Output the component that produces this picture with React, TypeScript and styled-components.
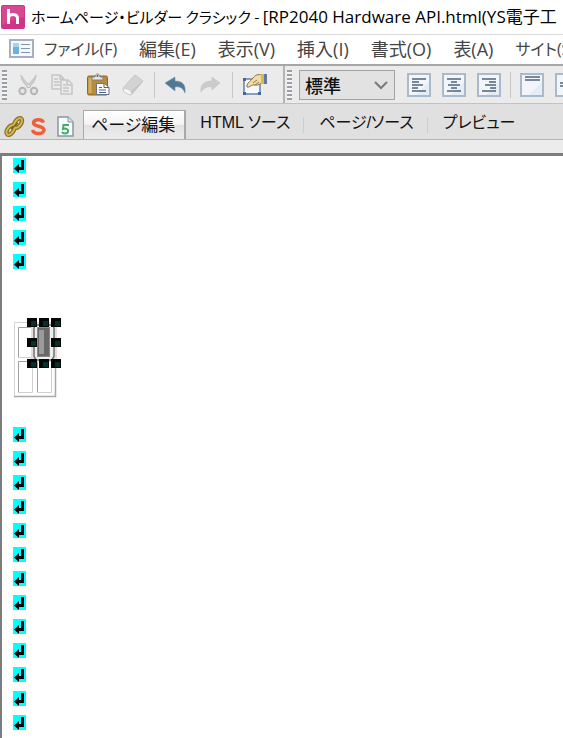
import React from "react";
import styled, { createGlobalStyle, css } from "styled-components";

const GlobalStyle = createGlobalStyle`
  * { box-sizing: border-box; }
  html, body, #root { height: 100%; }
  body {
    margin: 0;
    overflow: hidden;
    background: #fff;
    font-family: "Noto Sans CJK JP", "Noto Sans", sans-serif;
    font-feature-settings: "palt";
    color: #111;
  }
  button, select { font: inherit; font-feature-settings: inherit; color: inherit; }
`;

const Window = styled.main`
  display: flex;
  flex-direction: column;
  height: 100vh;
  min-width: 0;
  overflow: hidden;
`;

const TitleBar = styled.header`
  display: flex;
  align-items: center;
  gap: 6px;
  flex: none;
  height: 34px;
  padding-left: 1px;
  white-space: nowrap;
  overflow: hidden;
`;

const Title = styled.h1`
  flex: none;
  margin: 0;
  font-size: 15px;
  font-weight: 400;
  line-height: 34px;
  color: #000;
`;

const LatinText = styled.span`
  font-family: "Open Sans", "Noto Sans CJK JP", sans-serif;
  font-size: 17px;
`;

const MenuBar = styled.nav`
  display: flex;
  align-items: center;
  gap: 22px;
  flex: none;
  height: 30px;
  padding: 0 0 2px 9px;
  border-top: 1px solid #d9d9d9;
  overflow: hidden;
`;

const MenuLead = styled.div`
  display: flex;
  align-items: center;
  flex: none;
  gap: 10px;
`;

const MenuButton = styled.button<{ $kana?: boolean }>`
  flex: none;
  padding: 0;
  border: 0;
  background: none;
  font-family: "Open Sans", "Noto Sans CJK JP", sans-serif;
  font-size: ${(p) => (p.$kana ? 16 : 18)}px;
  line-height: 26px;
  color: #444;
  white-space: nowrap;
`;

const ToolBar = styled.div`
  display: flex;
  align-items: center;
  flex: none;
  height: 40px;
  border-top: 2px solid #a6a6a6;
  border-bottom: 1px solid #c2c2c2;
  background: #ebebeb;
  overflow: hidden;
`;

const ToolGroup = styled.div<{ $divided?: boolean }>`
  display: flex;
  align-items: center;
  flex: none;
  height: 100%;
  padding: 0 17px 0 2px;
  ${(p) => p.$divided && css`border-right: 2px solid #b4b4b4;`}
`;

const Grip = styled.div`
  flex: none;
  width: 5px;
  height: 30px;
  background: repeating-linear-gradient(#9a9ea5 0 2px, #f4f4f4 2px 4px);
`;

const Tools = styled.div<{ $start?: boolean }>`
  display: flex;
  gap: 11px;
  ${(p) => p.$start && css`margin-left: 9px;`}
`;

const ToolButton = styled.button`
  display: grid;
  place-items: center;
  width: 24px;
  height: 26px;
  padding: 0;
  border: 0;
  background: none;
`;

const Divider = styled.span`
  flex: none;
  width: 1px;
  height: 26px;
  margin: 0 9px;
  background: #c6c6c6;
`;

const TabDivider = styled.span`
  flex: none;
  align-self: center;
  width: 1px;
  height: 16px;
  margin: 0 15px 0 13px;
  background: #cecece;
`;

const SelectBox = styled.div`
  display: grid;
  align-items: center;
  flex: none;
  width: 96px;
  height: 30px;
  margin: 0 12px 0 7px;
  border: 1px solid #a3a3a3;
  background: #e2e2e2;
  & > * { grid-area: 1 / 1; }
  & > svg { justify-self: end; margin-right: 5px; pointer-events: none; }
`;

const StyleSelect = styled.select`
  width: 100%;
  height: 28px;
  padding: 0 0 0 5px;
  border: 0;
  appearance: none;
  background: none;
  font-size: 18px;
  font-weight: 500;
  line-height: 26px;
`;

const TabStrip = styled.div`
  display: flex;
  align-items: flex-end;
  flex: none;
  height: 36px;
  border-bottom: 1px solid #b5b5b5;
  background: #e0e0e0;
  overflow: hidden;
`;

const StatusTools = styled.div`
  display: flex;
  align-items: center;
  gap: 2px;
  flex: none;
  padding: 0 5px 0 2px;
`;

const Tabs = styled.div`
  display: flex;
  align-items: flex-end;
  flex: none;
`;

const Tab = styled.button<{ $active?: boolean }>`
  flex: none;
  padding: 0 0 4px;
  border: 0;
  background: none;
  font-family: "Liberation Sans", "Noto Sans CJK JP", sans-serif;
  font-size: 16px;
  line-height: 24px;
  white-space: nowrap;
  ${(p) =>
    p.$active &&
    css`
      margin-right: 14px;
      padding: 3px 9px 1px 7px;
      border: solid #a8a8a8;
      border-width: 1px 2px 0 1px;
      background: linear-gradient(#fff, #f3f3f3 50%, #e2e2e2 51%, #ececec);
      font-size: 17px;
    `}
`;

const Gutter = styled.div`
  flex: none;
  height: 13px;
  background: #ececec;
`;

const Editor = styled.section`
  flex: 1;
  min-height: 0;
  padding-left: 11px;
  border: solid #7d7d7d;
  border-width: 3px 0 0 2px;
  background: #fff;
  overflow: hidden;
`;

const Line = styled.div`
  height: 24px;
  padding-top: 2px;
`;

const TableBlock = styled.div`
  padding: 41px 0 26px;
`;

const Block = styled.svg`
  display: block;
  flex: none;
`;

const AppLogo = () => (
  <Block width="24" height="24" viewBox="0 0 24 24" aria-hidden="true">
    <rect width="24" height="24" rx="2" fill="#cf3487" />
    <path d="M1 1h22v11Q12 14 1 20z" fill="#db579c" opacity=".6" />
    <path d="M7.500 4v15M7.500 12.500c1-4 9-4.500 9 1V19" fill="none" stroke="#fff" strokeWidth="3" />
  </Block>
);

const DocumentIcon = () => (
  <Block width="25" height="19" viewBox="0 0 25 19" aria-hidden="true">
    <rect x="1" y="1" width="23" height="17" fill="#f7fafc" stroke="#a5b1bf" strokeWidth="2" />
    <rect x="4" y="4" width="6" height="11" fill="#6bb0df" />
    <rect x="4" y="4" width="6" height="4" fill="#a5d3f0" />
    <path d="M12 5.500h9M12 9.500h9M12 13.500h9" stroke="#8297ab" />
  </Block>
);

const ScissorsIcon = () => (
  <Block width="24" height="26" viewBox="0 0 24 26" aria-hidden="true">
    <path d="M5 3c0 5 3 9 8 13l2-2C11 11 8 8 5 3zM20 3c0 5-3 9-8 13l-2-2c4-3 7-6 10-11z" fill="#cdcdcd" stroke="#b8b8b8" strokeWidth=".7" />
    <circle cx="6.500" cy="19" r="3.200" fill="#e4e4e4" stroke="#b6b6b6" strokeWidth="2" />
    <circle cx="18" cy="19" r="3.200" fill="#e4e4e4" stroke="#b6b6b6" strokeWidth="2" />
  </Block>
);

const CopyIcon = () => (
  <Block width="24" height="26" viewBox="0 0 24 26" aria-hidden="true">
    <g fill="#ebebeb" stroke="#c6c6c6" strokeWidth="1.500">
      <path d="M1 3h8l4 4v10H1zM9 3v4h4" />
      <path d="M3 7h4M3 10h6M3 13h6" />
      <path d="M10 8h7l4 4v10H10zM16 8v5h5" />
      <path d="M12 13h3M12 16h6M12 19h6" />
    </g>
  </Block>
);

const PasteIcon = () => (
  <Block width="24" height="26" viewBox="0 0 24 26" aria-hidden="true">
    <rect x="1.500" y="4" width="20" height="19" rx="1.500" fill="#b98c3c" stroke="#93651e" />
    <path d="M4 6v15" stroke="#d6ae5f" strokeWidth="3" />
    <path d="M6 8V5h3c0-4 5-4 5 0h3v3z" fill="#e4e8eb" stroke="#7b8185" />
    <circle cx="11.500" cy="4" r="1" fill="#6c5129" />
    <path d="M10.500 11.500h8l4.500 4v7H10.500z" fill="#f8fafc" stroke="#66768a" />
    <path d="M18 11.500v4h5M13 15.500h3M13 18h7M13 20.500h7" fill="none" stroke="#53667e" />
  </Block>
);

const EraserIcon = () => (
  <Block width="24" height="26" viewBox="0 0 24 26" aria-hidden="true">
    <path d="M2 16 14 3l8 6-12 14-7-3z" fill="#c6c6c6" stroke="#bcbcbc" />
    <path d="m2 16 12-13 8 6-13 11z" fill="#d3d3d3" />
    <path d="m2 16 7 2 2 4-2 1-6-3z" fill="#f6f6f6" stroke="#c6c6c6" strokeWidth=".7" />
  </Block>
);

const CurvedArrow = ({ forward = false }: { forward?: boolean }) => (
  <Block width="24" height="26" viewBox="0 0 24 26" aria-hidden="true">
    <path
      d={forward
        ? "M21 11 13 5v4C6 9 1 12 2 20c3-4 6-6 11-5v3z"
        : "M1 11 11 5v4c8 0 11 4 10 12-2-5-5-7-10-6v4z"}
      fill={forward ? "#cbcbcb" : "#527994"}
      stroke={forward ? "#c4c4c4" : "#7796aa"}
      strokeWidth=".6"
    />
  </Block>
);

const PropertiesIcon = () => (
  <Block width="26" height="26" viewBox="0 0 26 26" aria-hidden="true">
    <rect x="2" y="7" width="16" height="15" fill="#f4f8ff" stroke="#6683aa" strokeWidth="1.500" />
    <path d="M1 6h3v3H1zM1 20h3v3H1zM16 20h3v3h-3z" fill="#46669b" />
    <path d="M5 13c1-3 4-4 6-7 2-3 5-4 9-3v8l-4 2h-5c-2 0-4 3-6 2z" fill="#f1dda4" stroke="#8a7546" />
    <path d="m11 11 4-3m-2 5 4-3" stroke="#8a7546" />
    <rect x="19" y="2" width="3" height="10" fill="#ddb84f" />
    <rect x="22" y="2" width="3" height="10" fill="#5b7c9b" />
  </Block>
);

const alignPaths = {
  left: "M5 6h14M5 9h7M5 12h11M5 15h6M5 18h14",
  center: "M5 6h14M9 9h6M6 12h12M9 15h6M5 18h14",
  right: "M5 6h14M12 9h7M8 12h11M13 15h6M5 18h14",
  top: "M5 4h15M5 7h15",
  middle: "M5 10h15M5 13h15",
};

const AlignIcon = ({ kind }: { kind: keyof typeof alignPaths }) => (
  <Block width="24" height="24" viewBox="0 0 24 24" aria-hidden="true">
    <rect x="1" y="1" width="22" height="22" fill="#f2f6fb" stroke="#abbacb" strokeWidth="2" />
    <path d="M22 9v13H9z" fill="#e4ecf6" />
    <path d={alignPaths[kind]} stroke="#4d647b" strokeWidth="1.600" />
  </Block>
);

const ChevronIcon = () => (
  <svg width="16" height="10" viewBox="0 0 16 10" aria-hidden="true">
    <path d="m2 2 6 6 6-6" fill="none" stroke="#7a7a7a" strokeWidth="2" />
  </svg>
);

const LinkIcon = () => (
  <Block width="24" height="26" viewBox="0 0 24 26" aria-hidden="true">
    <g fill="none" strokeWidth="4.500" stroke="#8c7423">
      <ellipse cx="8.500" cy="17" rx="3" ry="5.500" transform="rotate(35 8.500 17)" />
      <ellipse cx="16" cy="10" rx="3" ry="5.500" transform="rotate(35 16 10)" />
    </g>
    <g fill="none" strokeWidth="2" stroke="#d2b956">
      <ellipse cx="8.500" cy="17" rx="3" ry="5.500" transform="rotate(35 8.500 17)" />
      <ellipse cx="16" cy="10" rx="3" ry="5.500" transform="rotate(35 16 10)" />
    </g>
    <path d="m9 16 7-6" stroke="#735e18" strokeWidth="1.500" />
  </Block>
);

const SpellIcon = () => (
  <Block width="24" height="26" viewBox="0 0 24 26" aria-hidden="true">
    <path d="M15.500 9.500C14 5.500 5.500 6 5.500 10s10.500 2.500 10.500 7-10 5-11.500 0" fill="none" stroke="#ed6038" strokeWidth="3.500" />
  </Block>
);

const Html5Icon = () => (
  <Block width="24" height="26" viewBox="0 0 24 26" aria-hidden="true">
    <path d="M4 4h10l5 5v14H4z" fill="#f9fcfb" stroke="#8797a3" strokeWidth="1.500" />
    <path d="M14 4v5h5" fill="#dae3e9" stroke="#8797a3" />
    <path d="M15 12H9.500l-.5 4c6-2 7 4.500 2 4.500-1.500 0-2.500-.5-3-1.500" fill="none" stroke="#3fad68" strokeWidth="2" />
  </Block>
);

const ReturnMark = () => (
  <Block width="13" height="16" viewBox="0 0 13 16" role="img" aria-label="改行">
    <rect width="13" height="15" fill="#0ff" />
    <path d="M8 2h3v10H6v3L1 10.500 6 6v3h2z" fill="#080808" />
  </Block>
);

const handles = [
  [14, 0], [26, 0], [38, 0],
  [14, 20], [38, 20],
  [14, 41], [26, 41], [38, 41],
];

const SelectedTable = () => (
  <Block width="50" height="82" viewBox="0 0 50 82" role="img" aria-label="表">
    <path d="M1.500 79V5.500H42" fill="none" stroke="#d4d4d4" />
    <path d="M1 79.500h41.500V5" fill="none" stroke="#a8a8a8" strokeWidth="1.500" />
    <g fill="none">
      <path d="M5.500 40V10.500H19M5.500 75V44.500H19M24.500 75V44.500H38" stroke="#a0a0a0" />
      <path d="M5 40.500h14.500V10M5 75.500h14.500V44M24 75.500h14.500V44" stroke="#d0d0d0" />
    </g>
    <rect x="18" y="5" width="26" height="40" fill="#f3d6db" />
    <path d="M22 8h18l1 3v28l-2 4H23l-2-4V11z" fill="#eee" stroke="#5f7a76" strokeWidth="1.500" />
    <rect x="24.500" y="10.500" width="12" height="29" fill="#686868" stroke="#8a8a8a" />
    <rect x="26" y="13" width="5" height="24" fill="#9b9b9b" />
    {handles.map(([x, y]) => (
      <g key={`${x}-${y}`}>
        <rect x={x} y={y + 1} width="10" height="9" fill="#030807" />
        <rect x={x + 4} y={y + 4} width="5" height="5" fill="#06302b" />
      </g>
    ))}
  </Block>
);

const menus = ["編集(E)", "表示(V)", "挿入(I)", "書式(O)", "表(A)"];

const Lines = ({ count }: { count: number }) => (
  <>
    {Array.from({ length: count }, (_, i) => (
      <Line key={i}><ReturnMark /></Line>
    ))}
  </>
);

export default function App() {
  return (
    <>
      <GlobalStyle />
      <Window>
        <TitleBar>
          <AppLogo />
          <Title>
            ホームページ・ビルダー クラシック - <LatinText>[RP2040 Hardware API.html(YS電子工</LatinText>
          </Title>
        </TitleBar>
        <MenuBar aria-label="メニュー">
          <MenuLead>
            <DocumentIcon />
            <MenuButton $kana>ファイル(F)</MenuButton>
          </MenuLead>
          {menus.map((m) => <MenuButton key={m}>{m}</MenuButton>)}
          <MenuButton $kana>サイト(S)</MenuButton>
        </MenuBar>
        <ToolBar role="toolbar" aria-label="ツール">
          <ToolGroup $divided>
            <Grip />
            <Tools $start>
              <ToolButton aria-label="切り取り"><ScissorsIcon /></ToolButton>
              <ToolButton aria-label="コピー"><CopyIcon /></ToolButton>
              <ToolButton aria-label="貼り付け"><PasteIcon /></ToolButton>
              <ToolButton aria-label="削除"><EraserIcon /></ToolButton>
            </Tools>
            <Divider />
            <Tools>
              <ToolButton aria-label="元に戻す"><CurvedArrow /></ToolButton>
              <ToolButton aria-label="やり直し"><CurvedArrow forward /></ToolButton>
            </Tools>
            <Divider />
            <ToolButton aria-label="属性"><PropertiesIcon /></ToolButton>
          </ToolGroup>
          <ToolGroup>
            <Grip />
            <SelectBox>
              <StyleSelect aria-label="段落の書式" defaultValue="標準">
                <option>標準</option>
              </StyleSelect>
              <ChevronIcon />
            </SelectBox>
            <Tools>
              <ToolButton aria-label="左揃え"><AlignIcon kind="left" /></ToolButton>
              <ToolButton aria-label="中央揃え"><AlignIcon kind="center" /></ToolButton>
              <ToolButton aria-label="右揃え"><AlignIcon kind="right" /></ToolButton>
            </Tools>
            <Divider />
            <Tools>
              <ToolButton aria-label="上揃え"><AlignIcon kind="top" /></ToolButton>
              <ToolButton aria-label="上下中央揃え"><AlignIcon kind="middle" /></ToolButton>
            </Tools>
          </ToolGroup>
        </ToolBar>
        <TabStrip>
          <StatusTools>
            <ToolButton aria-label="リンク"><LinkIcon /></ToolButton>
            <ToolButton aria-label="スペルチェック"><SpellIcon /></ToolButton>
            <ToolButton aria-label="HTML5"><Html5Icon /></ToolButton>
          </StatusTools>
          <Tabs role="tablist">
            <Tab role="tab" aria-selected="true" $active>ページ編集</Tab>
            <Tab role="tab" aria-selected="false">HTML ソース</Tab>
            <TabDivider />
            <Tab role="tab" aria-selected="false">ページ/ソース</Tab>
            <TabDivider />
            <Tab role="tab" aria-selected="false">プレビュー</Tab>
          </Tabs>
        </TabStrip>
        <Gutter />
        <Editor aria-label="ページ編集領域">
          <Lines count={5} />
          <TableBlock><SelectedTable /></TableBlock>
          <Lines count={13} />
        </Editor>
      </Window>
    </>
  );
}
